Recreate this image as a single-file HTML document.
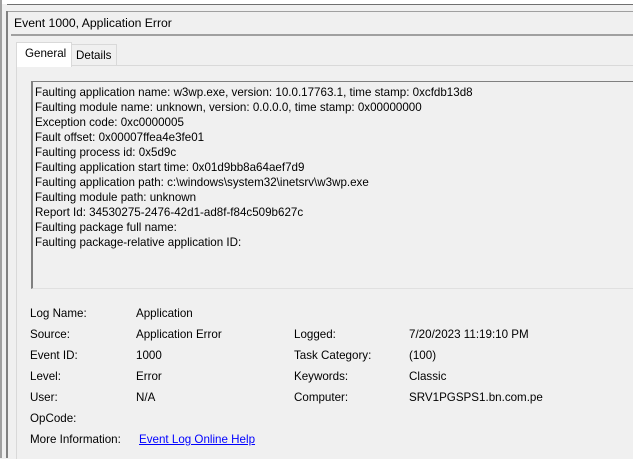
<!DOCTYPE html>
<html><head><style>
body{margin:0;width:633px;height:458px;overflow:hidden;background:#f0f0f0;font-family:"Liberation Sans",sans-serif;font-size:11.6px;color:#000;position:relative}
.a{position:absolute;white-space:nowrap}
</style></head><body>
<div class="a" style="left:0;top:0;width:633px;height:4px;background:#fff"></div>
<div class="a" style="left:7px;top:0;width:626px;height:4px;background:#fff;border-bottom:1px solid #707070"></div>
<div class="a" style="left:0;top:0;width:2px;height:458px;background:#a0a0a0"></div>
<div class="a" style="left:6px;top:11px;width:2px;height:447px;background:#808080"></div>
<div class="a" style="left:8px;top:11px;width:625px;height:1px;background:#a0a0a0"></div>
<div class="a" style="left:14px;top:16px;font-size:12.2px">Event 1000, Application Error</div>
<div class="a" style="left:11px;top:34px;width:622px;height:2px;background:#a0a0a0"></div>
<div class="a" style="left:16px;top:65px;width:617px;height:393px;border-left:1px solid #d9d9d9;border-top:1px solid #d9d9d9"></div>
<div class="a" style="left:71px;top:44px;width:44px;height:20px;border:1px solid #d9d9d9;border-bottom:none;background:#f0f0f0"></div>
<div class="a" style="left:16px;top:42px;width:54px;height:24px;border:1px solid #d9d9d9;border-bottom:none;background:#fff"></div>
<div class="a" style="left:25px;top:47px">General</div>
<div class="a" style="left:76px;top:49px">Details</div>
<div class="a" style="left:31px;top:81px;width:602px;height:206px;border-left:2px solid #808080;border-top:1px solid #808080;border-bottom:1px solid #e0e0e0"></div>
<div class="a" style="left:35px;top:85px;line-height:15px">Faulting application name: w3wp.exe, version: 10.0.17763.1, time stamp: 0xcfdb13d8<br>Faulting module name: unknown, version: 0.0.0.0, time stamp: 0x00000000<br>Exception code: 0xc0000005<br>Fault offset: 0x00007ffea4e3fe01<br>Faulting process id: 0x5d9c<br>Faulting application start time: 0x01d9bb8a64aef7d9<br>Faulting application path: c:\windows\system32\inetsrv\w3wp.exe<br>Faulting module path: unknown<br>Report Id: 34530275-2476-42d1-ad8f-f84c509b627c<br>Faulting package full name:<br>Faulting package-relative application ID:</div>
<div class="a" style="left:30px;top:307px">Log Name:</div><div class="a" style="left:136px;top:307px">Application</div>
<div class="a" style="left:30px;top:328px">Source:</div><div class="a" style="left:136px;top:328px">Application Error</div>
<div class="a" style="left:30px;top:349px">Event ID:</div><div class="a" style="left:136px;top:349px">1000</div>
<div class="a" style="left:30px;top:370px">Level:</div><div class="a" style="left:136px;top:370px">Error</div>
<div class="a" style="left:30px;top:391px">User:</div><div class="a" style="left:136px;top:391px">N/A</div>
<div class="a" style="left:30px;top:412px">OpCode:</div>
<div class="a" style="left:30px;top:433px">More Information:</div><div class="a" style="left:139px;top:433px;color:#00f;text-decoration:underline">Event Log Online Help</div>
<div class="a" style="left:294px;top:328px">Logged:</div><div class="a" style="left:409px;top:328px">7/20/2023 11:19:10 PM</div>
<div class="a" style="left:294px;top:349px">Task Category:</div><div class="a" style="left:409px;top:349px">(100)</div>
<div class="a" style="left:294px;top:370px">Keywords:</div><div class="a" style="left:409px;top:370px">Classic</div>
<div class="a" style="left:294px;top:391px">Computer:</div><div class="a" style="left:409px;top:391px">SRV1PGSPS1.bn.com.pe</div>
</body></html>
